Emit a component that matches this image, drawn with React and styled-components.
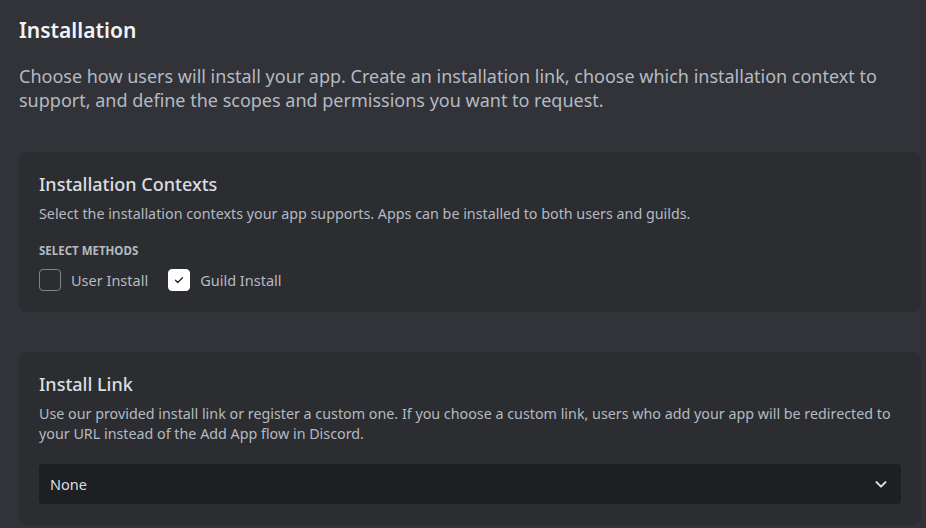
import styled, { createGlobalStyle } from 'styled-components'
import { useState } from 'react'

const GlobalStyle = createGlobalStyle`
  body {
    margin: 0;
    background: #313338;
    font-family: "Noto Sans", "Open Sans", sans-serif;
    color: #dbdee1;
  }
`

function Checkbox({ checked, label, onToggle }) {
  return (
    <CheckLabel onClick={onToggle}>
      <Box $checked={checked}>
        {checked && (
          <svg width="12" height="12" viewBox="0 0 24 24" fill="none">
            <path d="M5 12.5l4.5 4.5L19 7.5" stroke="#1e1f22" strokeWidth="2.4" strokeLinecap="round" strokeLinejoin="round" />
          </svg>
        )}
      </Box>
      <span>{label}</span>
    </CheckLabel>
  )
}

function App() {
  const [user, setUser] = useState(false);
  const [guild, setGuild] = useState(true);

  return (
    <Page>
      <GlobalStyle />
      <Title>Installation</Title>
      <Lead>
        Choose how users will install your app. Create an installation link, choose which installation context to
        support, and define the scopes and permissions you want to request.
      </Lead>

      <Card>
        <CardTitle>Installation Contexts</CardTitle>
        <CardText>Select the installation contexts your app supports. Apps can be installed to both users and guilds.</CardText>
        <SectionLabel>Select Methods</SectionLabel>
        <CheckRow>
          <Checkbox checked={user} label="User Install" onToggle={() => setUser((it) => !it)} />
          <Checkbox checked={guild} label="Guild Install" onToggle={() => setGuild((it) => !it)} />
        </CheckRow>
      </Card>

      <Card>
        <CardTitle>Install Link</CardTitle>
        <CardText>
          Use our provided install link or register a custom one. If you choose a custom link, users who add your app will be redirected to
          your URL instead of the Add App flow in Discord.
        </CardText>
        <Select>
          <span>None</span>
          <svg width="18" height="18" viewBox="0 0 24 24" fill="none">
            <path d="M6 9.5l6 6 6-6" stroke="#dbdee1" strokeWidth="2.8" strokeLinecap="round" strokeLinejoin="round" />
          </svg>
        </Select>
      </Card>
    </Page>
  )
}

export default App;

const Page = styled.div`
  display: flex;
  flex-direction: column;
  padding: 16px 5px 20px 19px;
  height: 528px;
  box-sizing: border-box;
  overflow: hidden;
`

const Title = styled.h1`
  margin: 0;
  font-size: 21px;
  line-height: 28px;
  font-weight: 600;
  color: #f2f3f5;
`

const Lead = styled.p`
  margin: 20px 0 40px 0;
  font-size: 18px;
  line-height: 24px;
  color: #b5bac1;
`

const Card = styled.section`
  background: #2b2d31;
  border-radius: 8px;
  padding: 20px 20px 21px 20px;
  margin-bottom: 40px;
  flex-shrink: 0;
`

const CardTitle = styled.h2`
  margin: 0;
  font-size: 18px;
  line-height: 24px;
  font-weight: 500;
  color: #dbdee1;
`

const CardText = styled.p`
  margin: 8px 0 0 0;
  font-size: 14.3px;
  line-height: 20px;
  color: #b5bac1;
`

const SectionLabel = styled.div`
  margin-top: 19px;
  font-size: 11.5px;
  line-height: 16px;
  font-weight: 700;
  text-transform: uppercase;
  color: #b5bac1;
`

const CheckRow = styled.div`
  display: flex;
  flex-direction: row;
  gap: 20px;
  margin-top: 10px;
`

const CheckLabel = styled.label`
  display: flex;
  align-items: center;
  gap: 10px;
  font-size: 14.5px;
  line-height: 20px;
  color: #b5bac1;
  cursor: pointer;
`

const Box = styled.div`
  width: 22px;
  height: 22px;
  box-sizing: border-box;
  border-radius: 4px;
  border: 1px solid ${(p) => (p.$checked ? '#ffffff' : '#80848e')};
  background: ${(p) => (p.$checked ? '#ffffff' : 'transparent')};
  display: flex;
  align-items: center;
  justify-content: center;
`

const Select = styled.div`
  margin-top: 20px;
  height: 40px;
  box-sizing: border-box;
  background: #1e1f22;
  border-radius: 4px;
  padding: 0 11px;
  display: flex;
  align-items: center;
  justify-content: space-between;
  font-size: 14.5px;
  color: #dbdee1;
`
